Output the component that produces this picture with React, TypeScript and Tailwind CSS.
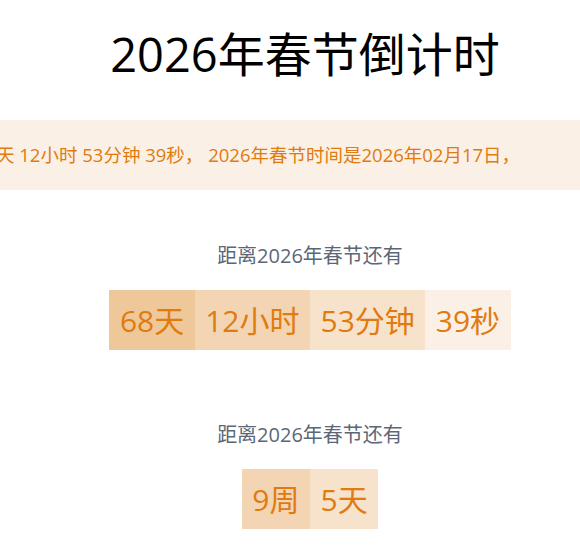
import React from "react";

const font = { fontFamily: '"Open Sans", "Noto Sans CJK SC", sans-serif' };

const fullBreakdown = [
  { label: "68天", bg: "bg-[#efc89a]" },
  { label: "12小时", bg: "bg-[#f3d5b3]" },
  { label: "53分钟", bg: "bg-[#f7e3cc]" },
  { label: "39秒", bg: "bg-[#fbf0e5]" },
];

const weekBreakdown = [
  { label: "9周", bg: "bg-[#f3d5b3]" },
  { label: "5天", bg: "bg-[#f7e3cc]" },
];

function Countdown({ items }: { items: { label: string; bg: string }[] }) {
  return (
    <div className="flex flex-col items-center">
      <div className="text-[20px] leading-[28px] text-[#5c6776]">距离2026年春节还有</div>
      <div className="mt-[20px] flex">
        {items.map((it) => (
          <div
            key={it.label}
            className={`${it.bg} h-[60px] px-[10.5px] flex items-center text-[30px] text-[#e07b10]`}
          >
            {it.label}
          </div>
        ))}
      </div>
    </div>
  );
}

export default function App() {
  return (
    <div className="w-[580px] h-[560px] overflow-hidden bg-white" style={font}>
      <div className="w-[620px]">
        <h1 className="pt-[19px] pr-[10px] text-center text-[47px] leading-[70px] text-black">2026年春节倒计时</h1>
        <div className="mt-[31px] h-[70px] bg-[#fbf0e5] overflow-hidden flex items-center">
          <div className="whitespace-nowrap text-[18.5px] text-[#e07b10] -ml-[197px]">
            距离2026年春节还有68天 12小时 53分钟 39秒， 2026年春节时间是2026年02月17日，
          </div>
        </div>
        <div className="mt-[52px]">
          <Countdown items={fullBreakdown} />
        </div>
        <div className="mt-[71px]">
          <Countdown items={weekBreakdown} />
        </div>
      </div>
    </div>
  );
}
